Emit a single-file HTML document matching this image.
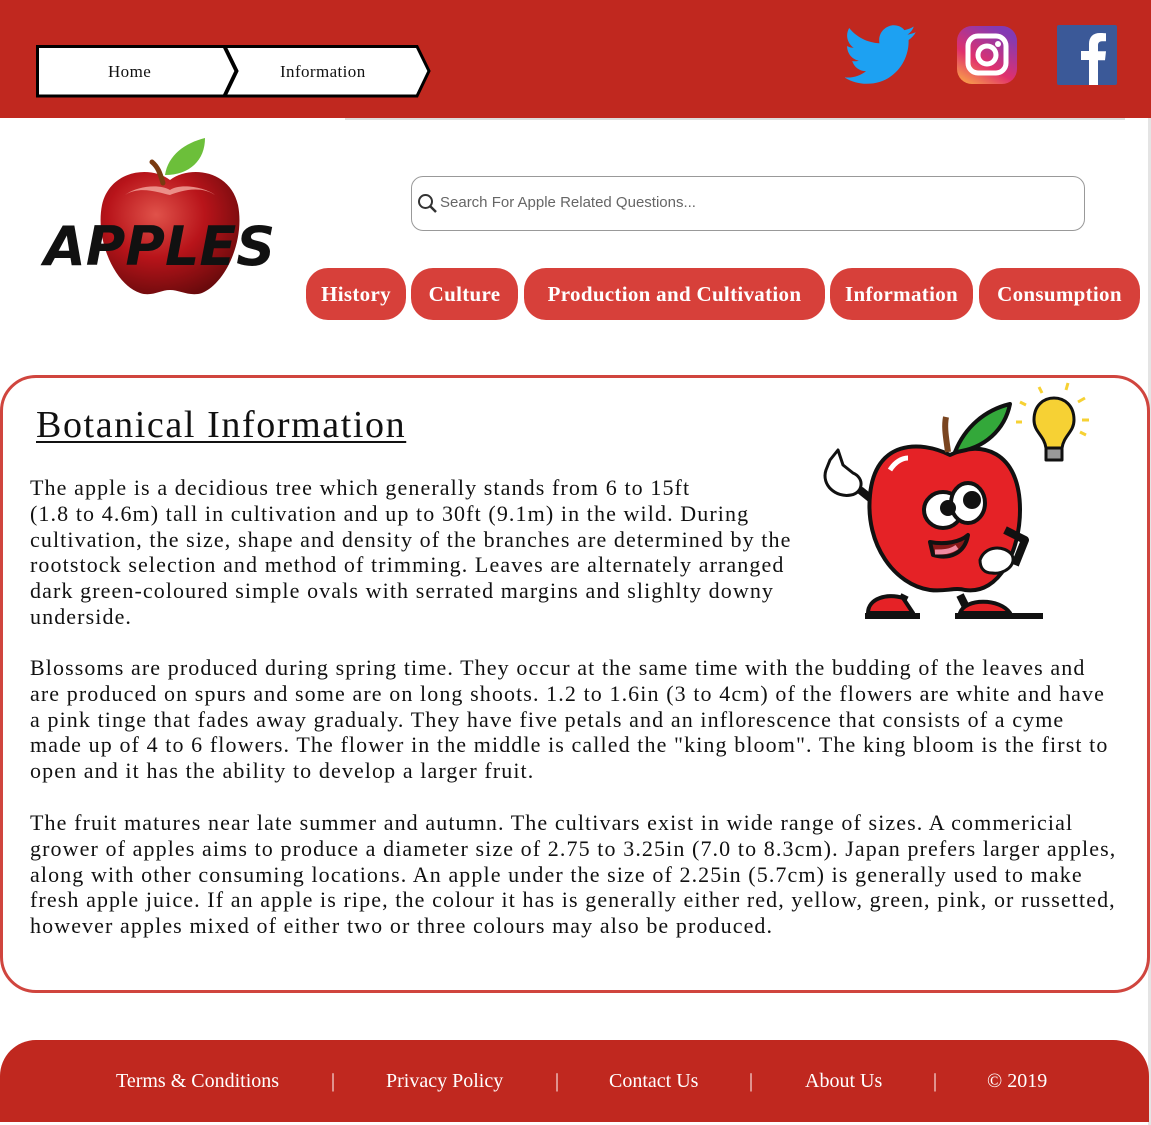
<!DOCTYPE html>
<html><head><meta charset="utf-8"><style>
*{margin:0;padding:0;box-sizing:border-box}
body{width:1151px;height:1125px;background:#fff;position:relative;overflow:hidden;font-family:"Liberation Serif",serif}
.hdr{position:absolute;left:0;top:0;width:1151px;height:118px;background:#c0281f}
.crumb{position:absolute;top:45px;height:52px}
.crumb svg{position:absolute;left:0;top:0}
.crumb span{position:absolute;top:1px;line-height:52px;font-size:17px;color:#111;letter-spacing:.4px}
.line{position:absolute;left:345px;top:118px;width:780px;height:2px;background:#ddd}
.rb{position:absolute;right:0;top:118px;width:3px;height:1007px;background:#e4e4e4}
.search{position:absolute;left:411px;top:176px;width:674px;height:55px;border:1.5px solid #999;border-radius:12px;font-family:"Liberation Sans",sans-serif;font-size:15px;color:#666;line-height:52px;padding-left:28px}
.btn{position:absolute;top:268px;height:52px;background:#d7403a;border-radius:22px;color:#fff;font-weight:bold;font-size:21px;line-height:52px;text-align:center;letter-spacing:.3px}
.card{position:absolute;left:0;top:375px;width:1150px;height:618px;border:3px solid #d0453e;border-radius:36px}
h1{position:absolute;left:36px;top:403px;font-size:38px;font-weight:normal;text-decoration:underline;text-decoration-thickness:2px;text-underline-offset:4px;color:#111;letter-spacing:1.6px}
.p{position:absolute;left:30px;font-size:22px;line-height:25.8px;color:#111;white-space:nowrap;letter-spacing:1.1px}
.ft{position:absolute;left:0;top:1040px;width:1149px;height:82px;background:#c0281f;border-radius:36px 36px 0 0}
.ft span{position:absolute;top:30px;color:#fff;font-size:20px}
</style></head><body>
<div class="hdr"></div>
<div class="crumb" style="left:36px">
<svg width="400" height="53"><path d="M1.5 1.5H188L200 26L188 51H1.5Z" fill="#fff" stroke="#000" stroke-width="3"/><path d="M189 1.5H381L393 26L381 51H189L201 26Z" fill="#fff" stroke="#000" stroke-width="3"/></svg>
<span style="left:72px">Home</span><span style="left:244px">Information</span></div>
<svg style="position:absolute;left:845px;top:25px" width="72" height="60" viewBox="0 0 24 20"><path d="M23.6 2.4c-.9.4-1.8.6-2.8.8 1-.6 1.800-1.6 2.1-2.7-.9.6-2 1-3.1 1.2C19 .7 17.7.1 16.3.1c-2.7 0-4.9 2.2-4.9 4.9 0 .4 0 .8.1 1.1C7.4 5.9 3.8 4 1.4 1 1 1.7.7 2.6.7 3.5c0 1.7.9 3.2 2.2 4.1-.8 0-1.6-.2-2.200-.6v.1c0 2.4 1.7 4.4 3.9 4.8-.4.1-.8.2-1.3.2-.3 0-.6 0-.9-.1.6 2 2.4 3.4 4.6 3.4-1.7 1.3-3.8 2.1-6.1 2.1-.4 0-.8 0-1.2-.1 2.2 1.4 4.8 2.2 7.5 2.2 9.1 0 14-7.5 14-14v-.6c1-.7 1.8-1.6 2.4-2.6z" fill="#1da1f2"/></svg>
<svg style="position:absolute;left:956px;top:25px" width="62" height="60" viewBox="0 0 62 60"><defs><linearGradient id="ig" x1="0" y1="1" x2="0.6" y2="0"><stop offset="0" stop-color="#fcb045"/><stop offset=".45" stop-color="#e1306c"/><stop offset="1" stop-color="#833ab4"/></linearGradient></defs><rect x="1" y="1" width="60" height="58" rx="15" fill="url(#ig)"/><rect x="12" y="11" width="38" height="37" rx="10" fill="none" stroke="#fff" stroke-width="5"/><circle cx="31" cy="30" r="9" fill="none" stroke="#fff" stroke-width="5"/><circle cx="42" cy="19" r="3" fill="#fff"/></svg>
<svg style="position:absolute;left:1057px;top:25px" width="60" height="60" viewBox="0 0 60 60"><rect width="60" height="60" rx="2" fill="#3b5998"/><path d="M32 60V35h-8v-9h8v-7c0-7 4-11 11-11 3 0 6 .3 6 .3v8h-4c-3 0-4 2-4 4v6h8l-1 9h-7v25z" fill="#fff"/></svg>
<div class="line"></div><div class="rb"></div>
<svg style="position:absolute;left:40px;top:135px" width="250" height="165" viewBox="0 0 250 165">
<defs><radialGradient id="ap" cx=".4" cy=".35" r=".7"><stop offset="0" stop-color="#e0524a"/><stop offset=".5" stop-color="#b8141a"/><stop offset="1" stop-color="#6a0a0c"/></radialGradient></defs>
<path d="M130 45C110 30 70 35 62 70 55 105 75 150 100 158 112 162 120 155 130 155 140 155 150 162 162 158 186 148 205 105 198 70 190 35 150 30 130 45Z" fill="url(#ap)"/>
<path d="M85 60C100 50 120 58 130 60 140 56 160 50 175 60 165 52 140 48 130 55 118 48 95 52 85 60Z" fill="#f4a9a0" opacity=".8"/>
<path d="M123 48C120 38 118 32 112 27" stroke="#7a3a10" stroke-width="5" fill="none" stroke-linecap="round"/>
<path d="M125 40C128 20 145 8 165 3 165 25 150 40 125 40Z" fill="#6cbf3a"/>
<text x="4" y="130" font-family="DejaVu Sans,sans-serif" font-weight="bold" font-style="italic" font-size="54" fill="#111">APPLES</text>
</svg>
<div class="search">Search For Apple Related Questions...</div>
<svg style="position:absolute;left:417px;top:193px" width="22" height="22" viewBox="0 0 22 22"><circle cx="8.5" cy="8.5" r="6.5" fill="none" stroke="#333" stroke-width="2"/><path d="M13 13l6 6" stroke="#333" stroke-width="2.5"/></svg>
<div class="btn" style="left:306px;width:100px">History</div>
<div class="btn" style="left:411px;width:107px">Culture</div>
<div class="btn" style="left:524px;width:301px">Production and Cultivation</div>
<div class="btn" style="left:830px;width:143px">Information</div>
<div class="btn" style="left:979px;width:161px">Consumption</div>
<div class="card"></div>
<h1>Botanical Information</h1>
<div class="p" style="top:475px">The apple is a decidious tree which generally stands from 6 to 15ft<br>(1.8 to 4.6m) tall in cultivation and up to 30ft (9.1m) in the wild. During<br>cultivation, the size, shape and density of the branches are determined by the<br>rootstock selection and method of trimming. Leaves are alternately arranged<br>dark green-coloured simple ovals with serrated margins and slighlty downy<br>underside.</div>
<div class="p" style="top:655px">Blossoms are produced during spring time. They occur at the same time with the budding of the leaves and<br>are produced on spurs and some are on long shoots. 1.2 to 1.6in (3 to 4cm) of the flowers are white and have<br>a pink tinge that fades away gradualy. They have five petals and an inflorescence that consists of a cyme<br>made up of 4 to 6 flowers. The flower in the middle is called the "king bloom". The king bloom is the first to<br>open and it has the ability to develop a larger fruit.</div>
<div class="p" style="top:810px">The fruit matures near late summer and autumn. The cultivars exist in wide range of sizes. A commericial<br>grower of apples aims to produce a diameter size of 2.75 to 3.25in (7.0 to 8.3cm). Japan prefers larger apples,<br>along with other consuming locations. An apple under the size of 2.25in (5.7cm) is generally used to make<br>fresh apple juice. If an apple is ripe, the colour it has is generally either red, yellow, green, pink, or russetted,<br>however apples mixed of either two or three colours may also be produced.</div>
<svg style="position:absolute;left:810px;top:380px" width="300" height="250" viewBox="0 0 300 250" stroke="#111" stroke-width="4" stroke-linejoin="round">
<path d="M95 215l-10 20M150 215l10 20" stroke-width="8"/>
<path d="M58 233c0-15 20-20 35-15l10 15z" fill="#e52226"/><path d="M55 236h55" stroke-width="6"/>
<path d="M150 233c5-15 40-15 50 0z" fill="#e52226"/><path d="M145 236h88" stroke-width="6"/>
<path d="M50 110l25 20" stroke-width="8"/>
<path d="M140 75c-30-15-75-15-80 40-5 50 25 90 60 95 15 2 25-3 35 0 35 5 55-40 55-80 0-60-40-70-70-55z" fill="#e52226"/>
<path d="M80 90c5-8 12-12 18-12" stroke="#fff" stroke-width="5" fill="none"/>
<path d="M138 72c-2-15-4-25-2-35" stroke="#7a4520" stroke-width="6" fill="none"/>
<path d="M145 72c10-25 30-42 55-48-5 25-25 45-55 48z" fill="#33a83a"/>
<ellipse cx="133" cy="130" rx="19" ry="18" fill="#fff"/><ellipse cx="158" cy="123" rx="17" ry="20" fill="#fff"/>
<circle cx="138" cy="128" r="6" fill="#111"/><circle cx="162" cy="120" r="7" fill="#111"/>
<path d="M120 162c15 3 30 0 38-7-3 18-18 25-35 20z" fill="#8a1818"/>
<path d="M125 172c8 0 15 0 22-5" stroke="#f08aa0" stroke-width="5" fill="none"/>
<path d="M20 80l8-10 5 15 10 8c12 5 10 20-2 22-15 3-30-10-25-25z" fill="#fff" stroke-width="3"/>
<path d="M195 150l20 10-10 25" stroke-width="8" fill="none"/>
<path d="M170 180c5-15 25-15 32-5 5 10-8 20-20 18-8 0-12-5-12-13z" fill="#fff" stroke-width="3"/>
<path d="M224 40c0-15 10-22 20-22s20 7 20 22c0 12-10 15-12 28h-16c-2-13-12-16-12-28z" fill="#f6d134" stroke-width="3"/>
<path d="M236 68h16v12h-16z" fill="#999" stroke-width="3"/>
<g stroke="#f6d134" stroke-width="3"><path d="M232 13l-3-6M256 10l2-7M268 22l7-4M272 40h7M270 52l6 3M216 25l-6-3M212 42h-6"/></g>
</svg>
<div class="ft">
<span style="left:116px">Terms &amp; Conditions</span>
<span style="left:331px">|</span>
<span style="left:386px">Privacy Policy</span>
<span style="left:555px">|</span>
<span style="left:609px">Contact Us</span>
<span style="left:749px">|</span>
<span style="left:805px">About Us</span>
<span style="left:933px">|</span>
<span style="left:987px">© 2019</span>
</div>
</body></html>
